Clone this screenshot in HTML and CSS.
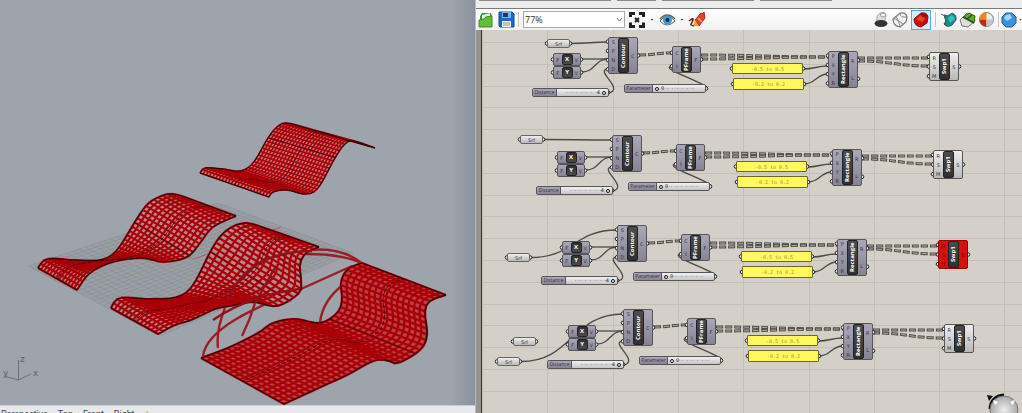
FILE: index.html
```html
<!DOCTYPE html>
<html lang="en">
<head>
<meta charset="utf-8">
<title>Rhino and Grasshopper</title>
<link rel="stylesheet" href="styles.css">
</head>
<body>
<main class="workspace">
  <section class="rhino">
    <svg class="viewport" id="viewport" aria-label="Perspective viewport"></svg>
    <nav class="view-tabs">
      <a class="view-tab" href="#perspective">Perspective</a>
      <a class="view-tab" href="#top">Top</a>
      <a class="view-tab" href="#front">Front</a>
      <a class="view-tab" href="#right">Right</a>
      <a class="view-tab" href="#add">+</a>
    </nav>
  </section>

  <section class="grasshopper">
    <div class="ribbon"><i class="ribbon-a"></i><i class="ribbon-b"></i><i class="ribbon-c"></i><i class="ribbon-d"></i></div>
    <div class="toolbar">
      <button class="tool" aria-label="Open"><svg width="16" height="18" viewBox="0 0 16 18"><path d="M2 5 4 2h9l1 3v10H2z" fill="#3c9148"/><path d="M4 4 12 2v10l-8 2z" fill="#d9eed9"/><path d="m1 9 5-1 2-2 6-1v11H1z" fill="#62bd3a" stroke="#3a8b25"/></svg></button>
      <button class="tool save" aria-label="Save"><svg width="17" height="18" viewBox="0 0 17 18"><path d="M1 1h13l2 2v13H2l-1-1z" fill="#1f68c4" stroke="#164a91"/><path d="M4 1h9v6H4z" fill="#74b6ef"/><path d="M5 2h5v4H5z" fill="#23384e"/><path d="M4 10h9v6H4z" fill="#eee"/><path d="M5 12h7M5 14h7" stroke="#999"/></svg></button>
      <span class="divider"></span>
      <span class="zoom-box"><select class="zoom" aria-label="Zoom"><option>77%</option></select><svg class="chevron" width="7" height="5" viewBox="0 0 7 5" aria-hidden="true"><path d="m1 1 2.500 3L6 1" fill="none" stroke="#777"/></svg></span>
      <button class="tool" aria-label="Zoom extents"><svg width="16" height="16" viewBox="0 0 16 16"><path d="M1.500 5V1.500H6M10 1.500h4.500V5M14.500 10.500v4H10M6 14.500H1.500v-4" fill="none" stroke="#222" stroke-width="3"/><path d="m6 6 4 4m0-4-4 4" stroke="#222" stroke-width="2"/></svg></button>
      <span class="drop"></span>
      <button class="tool" aria-label="Named views"><svg width="17" height="14" viewBox="0 0 17 14"><path d="M1 8Q8-2 16 8 8 16 1 8z" fill="#e9f3f8" stroke="#5b6870"/><circle cx="8.500" cy="7" r="4.500" fill="#3d9bd4"/><circle cx="8.500" cy="7" r="2" fill="#102840"/><path d="M1 6Q8-2 16 6" fill="none" stroke="#5b6870" stroke-width="1.500"/></svg></button>
      <span class="drop"></span>
      <button class="tool" aria-label="Sketch"><svg width="18" height="17" viewBox="0 0 18 17"><path d="M7 9 13 2l2 1 1-2 1 6-6 8z" fill="#e2432b" stroke="#b12917"/><path d="m10 7 4 4" stroke="#f3a28f" stroke-width="1.500"/><path d="m7 9 4 6-6 0z" fill="#e9a32e"/><path d="M1 10q5-4 4-1t-2 4 3 2" fill="none" stroke="#61231c" stroke-width="1.500"/></svg></button>
      <span class="grow"></span>
      <span class="tool-set">
      <button class="tool" aria-label="No preview"><svg width="16" height="18" viewBox="0 0 16 18"><path d="M4 5 7 2q6-2 6 3l-2 8H4z" fill="#dedede" stroke="#aaa"/><ellipse cx="10" cy="4" rx="2.500" ry="2" fill="#fff" stroke="#999"/><ellipse cx="8" cy="12.500" rx="6.500" ry="3.500" fill="#333"/></svg></button>
      <button class="tool" aria-label="Wireframe preview"><svg width="18" height="18" viewBox="0 0 18 18"><path d="M2 8 9 2q6-1 7 4l-1 5-6 5q-7-1-7-8z" fill="#f3f3f3" stroke="#777" stroke-width="1.200"/><path d="M2 8q6-1 7 8M9 2q0 5 7 4M5 5q1 5 7 8" fill="none" stroke="#888"/></svg></button>
      <button class="tool tool-active" aria-label="Shaded preview"><svg width="18" height="18" viewBox="0 0 18 18"><path d="M2 8 9 2q6-1 7 4l-1 6-6 4q-7-1-7-8z" fill="#c90d0d" stroke="#850b0b"/><path d="M4 8 9 4q3 1 4 4l-3 3z" fill="#ef3c2c"/><ellipse cx="12" cy="4" rx="3" ry="2" fill="#971010"/></svg></button>
      </span>
      <span class="divider"></span>
      <span class="tool-set">
      <button class="tool" aria-label="Preview selected"><svg width="17" height="18" viewBox="0 0 17 18"><path d="m4 4 4 1 4-3q5 2 4 7l-4 5q-5 3-8-1l2-3z" fill="#15918e" stroke="#245858"/><path d="m8 7 4-3 3 4-5 4z" fill="#36c1ba"/><path d="m1 3 4 2 1 9" fill="none" stroke="#555"/></svg></button>
      <button class="tool" aria-label="Preview mesh"><svg width="17" height="18" viewBox="0 0 17 18"><path d="m1 9 7-7 7 3 1 5-7 6-6-1z" fill="#ddd" stroke="#777"/><path d="m5 6 5-4 6 3-1 7z" fill="#62ac17" stroke="#346810"/><path d="m4 6 11 6M8 8l5-4" stroke="#284e15" stroke-width="1.500"/></svg></button>
      <button class="tool" aria-label="Preview quality"><svg width="17" height="17" viewBox="0 0 17 17"><circle cx="8.500" cy="8.500" r="7" fill="#eee" stroke="#777"/><path d="M8.500 1.500v7h-7a7 7 0 0 1 7-7z" fill="#ef8a16"/><path d="M8.500 8.500v7a7 7 0 0 1-7-7z" fill="#c82818"/><path d="M8.500 8.500h7a7 7 0 0 1-7 7z" fill="#c4c4c4"/></svg></button>
      </span>
      <span class="tool-set tool-set-end">
      <span class="divider"></span>
      <button class="tool" aria-label="Document preview"><svg width="16" height="16" viewBox="0 0 16 16"><path d="m5 1 6 0 4 4v6l-4 4H5l-4-4V5z" fill="#3c92dc" stroke="#2b5b94"/><path d="m5 3 4-1 2 4-5 3-3-3z" fill="#9ed8fa"/></svg></button>
      <span class="drop drop-last"></span>
      </span>
    </div>
    <div class="canvas-frame">
      <div class="canvas" id="canvas">
        <svg class="wires" id="wires" aria-hidden="true"></svg>
        <svg class="compass" width="36" height="20" viewBox="0 0 36 20" aria-hidden="true">
          <defs><radialGradient id="ball"><stop offset="0" stop-color="#eee"/><stop offset="1" stop-color="#a9a9a9"/></radialGradient></defs>
          <path d="M4 16Q5 3 18 2" fill="none" stroke="#111" stroke-width="3"/><path d="m1 2 6 1-4 5z" fill="#111"/>
          <circle cx="18" cy="17" r="14" fill="url(#ball)" stroke="#777"/><path d="m7 7 5 2-3 3zm22 0-5 2 3 3z" fill="#fff"/>
        </svg>
      </div>
    </div>
  </section>
</main>
<script src="script.js"></script>
</body>
</html>
```
FILE: styles.css
```css
* { box-sizing: border-box; }
body { margin: 0; font-family: "Open Sans", "Noto Sans", sans-serif; }
.workspace { display: grid; grid-template-columns: 475fr 547fr; height: 100vh; overflow: hidden; }
.rhino { display: flex; flex-direction: column; min-width: 0; background: linear-gradient(90deg, #9da4ab calc(100% - 24px), #8b919d); }
.viewport { flex: 1; width: 100%; min-height: 0; }
.axis-name { font: 9px "DejaVu Sans", sans-serif; fill: #606267; }
.view-tabs { display: flex; gap: 10px; height: 8px; padding: 2px 1px 0; overflow: hidden; background: #e7e9ed; border-top: 1px solid #c8ced4; }
.view-tab { color: #444; font: 9px/12px Roboto, sans-serif; text-decoration: none; }
.view-tab:last-child { color: #777; }

.grasshopper { display: flex; flex-direction: column; min-width: 0; border-left: 1px solid #b8bcc2; background: #eee; }
.ribbon { display: flex; gap: 6px; height: 9px; padding-left: 3px; border-bottom: 1px solid #7b7b7b; background: #ececed; }
.ribbon i { height: 1px; background: #8a8a8a; }
.ribbon-a { width: 132px; }
.ribbon-b { width: 39px; }
.ribbon-c { width: 92px; }
.ribbon-d { width: 72px; }
.toolbar { display: flex; align-items: center; gap: 4px; height: 21px; padding-left: 2px; overflow: hidden; background: linear-gradient(#fff, #f1f1f1); }
.tool { display: flex; flex: none; align-items: center; justify-content: center; width: 16px; height: 20px; padding: 0; border: 0; background: none; }
.tool svg { flex: none; }
.tool-set { display: flex; flex: none; align-items: center; gap: 3px; }
.tool-set-end { gap: 2px; }
.tool-active { width: 20px; border: 1px solid #5ba7df; background: #d8ebf9; }
.divider { flex: none; width: 1px; height: 15px; background: #c6c6c6; }
.zoom-box { position: relative; display: flex; flex: none; width: 102px; height: 17px; }
.zoom { width: 100%; height: 100%; padding: 0 1px; border: 1px solid #aaa; appearance: none; background: #fff; color: #333; font: 9px "Open Sans", sans-serif; }
.chevron { position: absolute; right: 2px; top: 6px; pointer-events: none; }
.drop { flex: none; width: 4px; height: 2px; margin: 0 1px; background: #333; clip-path: polygon(0 0, 100% 0, 50% 100%); }
.drop-last { width: 3px; margin: 0; }
.grow { flex: 1; }
.canvas-frame { display: flex; flex: 1; min-height: 0; padding-left: 5px; background: #96948e; }
.canvas { position: relative; flex: 1; overflow: hidden; border-left: 1px solid #333; background: #d4d0c8; }
.wires { position: absolute; width: 100%; height: 100%; }
.grid-line { stroke: #c4c0b8; }
.wire { fill: none; stroke: #4b4b49; stroke-width: 1.3; }
.wire-tree { fill: none; stroke: #4e4d4a; stroke-width: 3; stroke-dasharray: 7 2; }
.wire-core { fill: none; stroke: #b4b0a8; stroke-width: 1; stroke-dasharray: 5 4; stroke-dashoffset: -1; }
.grip { fill: #eee; stroke: #222; }
.compass { position: absolute; right: 0; bottom: 0; }

.node { position: absolute; display: flex; border: 1px solid #55545c; border-radius: 2px; background: linear-gradient(#aaa8b8, #868493); color: #33323a; font: 5px/6px "DejaVu Sans", sans-serif; }
.node-light { background: linear-gradient(#eee, #b9b9b9); }
.node-error { border-color: #900; background: #d61010; color: #6d0000; }
.ports { display: flex; flex: 1; flex-direction: column; justify-content: space-around; text-align: center; }
.core { display: flex; flex: none; align-items: center; justify-content: center; width: 11px; border: 1px solid #222; border-radius: 2px; background: linear-gradient(#303030, #4b4b4b); color: #fff; font: bold 6px/9px "Open Sans", sans-serif; }
.core-tall { writing-mode: vertical-rl; rotate: 180deg; white-space: nowrap; }
.param { align-items: center; justify-content: center; border-color: #666; }
.panel { align-items: center; justify-content: center; border-color: #6b6725; border-radius: 1px; background: #fff95c; color: #99953c; font: 5px/8px "DejaVu Sans Mono", monospace; }
.slider { align-items: stretch; overflow: hidden; background: linear-gradient(#f1f1f1, #c5c5c5); }
.slider-name { flex: none; border-right: 1px solid #55545c; background: linear-gradient(#aaa8b8, #868493); font-family: "Open Sans", sans-serif; line-height: 7px; text-align: center; }
.name-distance { width: 24px; }
.name-parameter { width: 28px; }
.track { position: relative; display: flex; flex: 1; align-items: center; min-width: 0; padding: 0 2px; }
.range { flex: 1; min-width: 0; width: 0; height: 5px; margin: 0; appearance: none; background: repeating-linear-gradient(90deg, #aaa 0 1px, #ccc 1px 5px) center / 70% 1px no-repeat; }
.range::-webkit-slider-thumb { appearance: none; width: 4px; height: 4px; border: 1px solid #111; border-radius: 50%; background: #fff; }
.value { position: absolute; top: 0; line-height: 7px; color: #222; }
.track-end .value { right: 8px; }
.track-start .value { left: 8px; }
```
FILE: script.js
```js
const NS = "http://www.w3.org/2000/svg";
function draw(parent, name, attrs, text) {
  const el = document.createElementNS(NS, name);
  for (const key in attrs) el.setAttribute(key, attrs[key]);
  if (text) el.textContent = text;
  parent.appendChild(el);
  return el;
}

/* ---- Perspective viewport ---- */
const view = document.getElementById("viewport");
const mix = (p, q, t) => [p[0] + (q[0] - p[0]) * t, p[1] + (q[1] - p[1]) * t];
const toPath = pts => "M" + pts.map(p => p[0].toFixed(2) + "," + p[1].toFixed(2)).join("L");

// Catmull-Rom curve through the points, resampled to n + 1 equal steps.
function smooth(points, n) {
  const dense = [];
  for (let i = 0; i < points.length - 1; i++) {
    const a = points[Math.max(0, i - 1)], b = points[i], c = points[i + 1], d = points[Math.min(points.length - 1, i + 2)];
    for (let s = 0; s < 16; s++) {
      const t = s / 16;
      dense.push([0, 1].map(k => 0.5 * (2 * b[k] + (c[k] - a[k]) * t + (2 * a[k] - 5 * b[k] + 4 * c[k] - d[k]) * t * t + (3 * b[k] - a[k] - 3 * c[k] + d[k]) * t * t * t)));
    }
  }
  dense.push(points[points.length - 1]);
  const len = [0];
  for (let i = 1; i < dense.length; i++) len.push(len[i - 1] + Math.hypot(dense[i][0] - dense[i - 1][0], dense[i][1] - dense[i - 1][1]));
  const out = [];
  let j = 1;
  for (let i = 0; i <= n; i++) {
    const goal = len[len.length - 1] * i / n;
    while (j < len.length - 1 && len[j] < goal) j++;
    out.push(mix(dense[j - 1], dense[j], (goal - len[j - 1]) / (len[j] - len[j - 1])));
  }
  return out;
}

function surface(s) {
  const a = smooth(s.a, s.u), b = smooth(s.b, s.u);
  let cells = "", lines = "";
  for (let i = 0; i < s.u; i++) {
    const quad = [a[i], a[i + 1], b[i + 1], b[i]];
    const area = quad.reduce((sum, p, k) => { const q = quad[(k + 1) % 4]; return sum + p[0] * q[1] - q[0] * p[1]; }, 0);
    cells += toPath(area < 0 ? quad.reverse() : quad) + "Z";
  }
  for (let i = 0; i <= s.u; i++) lines += toPath([a[i], b[i]]);
  for (let k = 0; k <= s.v; k++) lines += toPath(a.map((p, i) => mix(p, b[i], k / s.v)));
  draw(view, "path", { d: cells, fill: s.fill, stroke: s.fill, "stroke-width": 0.5 });
  draw(view, "path", { d: lines, fill: "none", stroke: "#a80006", "stroke-width": s.line });
  const mid = Math.round(s.u * 0.66);
  draw(view, "path", { d: toPath(a.map((p, i) => mix(p, b[i], 0.5))) + toPath([a[mid], b[mid]]), fill: "none", stroke: "#420006", "stroke-width": 0.8, "stroke-dasharray": "5 1" });
  draw(view, "path", { d: toPath(a) + toPath(b) + toPath([a[0], b[0]]) + toPath([a[s.u], b[s.u]]), fill: "none", stroke: "#1c0c10", "stroke-width": 1 });
}

const ground = [[28, 266], [218, 203], [353, 253], [160, 336]];
draw(view, "path", { d: toPath(ground) + "Z", fill: "#999fa5" });
let mesh = "";
for (let i = 0; i <= 30; i++) {
  const t = i / 30;
  mesh += toPath([mix(ground[0], ground[1], t), mix(ground[3], ground[2], t)]) + toPath([mix(ground[0], ground[3], t), mix(ground[1], ground[2], t)]);
}
draw(view, "path", { d: mesh, fill: "none", stroke: "#868c91", "stroke-width": 0.5 });
draw(view, "path", { d: "M194 259 281 227", stroke: "#b45a60" });
draw(view, "path", { d: "M160 247 194 259", stroke: "#58a356" });

surface({ u: 34, v: 22, line: 1.6, fill: "#c07a81",
  a: [[200, 173], [205, 168], [223, 169], [240, 171], [253, 163], [268, 138], [277, 127], [287, 123], [309, 129]],
  b: [[269, 197], [273, 192], [287, 190], [305, 194], [318, 188], [335, 158], [345, 144], [354, 141], [375, 148]] });
surface({ u: 36, v: 13, line: 2.1, fill: "#b8868e",
  a: [[38, 268], [47, 259], [73, 260], [100, 260], [117, 250], [138, 217], [150, 202], [168, 194], [182, 196]],
  b: [[77, 290], [90, 273], [113, 262], [143, 258], [163, 262], [187, 257], [200, 243], [213, 227], [236, 216]] });

const ribs = (d, color) => draw(view, "path", { d, fill: "none", stroke: color, "stroke-width": 2.4 });
ribs("M203 356C207 326 265 304 301 289L352 266M218 348Q216 330 225 308M242 336Q250 320 255 303M310 250Q342 247 363 264M306 254Q345 254 363 264M320 322Q323 300 343 285", "#9b1d26");
surface({ u: 36, v: 13, line: 2.2, fill: "#b8868e",
  a: [[111, 308], [120, 298], [150, 299], [177, 297], [193, 285], [213, 247], [227, 230], [245, 223], [262, 227]],
  b: [[158, 334], [175, 325], [191, 320], [215, 309], [230, 306], [253, 302], [277, 306], [299, 293], [301, 280], [300, 264], [306, 253], [319, 247]] });
ribs("M228 300Q246 252 312 251M255 303 276 266M213 320Q250 295 300 289", "#8f1119");
surface({ u: 38, v: 15, line: 2.3, fill: "#b9424a",
  a: [[201, 358], [230, 347], [258, 333], [273, 323], [295, 319], [320, 323], [337, 313], [342, 300], [341, 282], [348, 269], [362, 263]],
  b: [[284, 404], [323, 386], [347, 375], [373, 361], [386, 360], [398, 363], [420, 350], [427, 335], [425, 312], [430, 301], [446, 295]] });

draw(view, "path", { d: "M18.500 360V380L31 374M18.500 380 4 376", fill: "none", stroke: "#6e7075" });
draw(view, "text", { x: 20, y: 362, class: "axis-name" }, "z");
draw(view, "text", { x: 33, y: 376, class: "axis-name" }, "x");
draw(view, "text", { x: 3, y: 376, class: "axis-name" }, "y");

/* ---- Definition canvas ---- */
const canvas = document.getElementById("canvas");
const wires = document.getElementById("wires");
for (let i = 0; i < 60; i++) draw(wires, "line", { x1: 0, x2: "100%", y1: 12.5 + Math.round(i * 21.8), y2: 12.5 + Math.round(i * 21.8), class: "grid-line" });
for (let i = 0; i < 30; i++) draw(wires, "line", { y1: 0, y2: "100%", x1: 0.5 + Math.round(i * 65.3), x2: 0.5 + Math.round(i * 65.3), class: "grid-line" });

const rows = [
  { x: 0, y: 0, srf: [[65, 9]] },
  { x: 4, y: 98, srf: [[38, 105]] },
  { x: 9, y: 188, srf: [[25, 223]] },
  { x: 15, y: 272, srf: [[31, 307], [15, 327]] }
];

function node(x, y, w, h, cls, html) {
  const el = document.createElement("div");
  el.className = "node " + cls;
  el.style.cssText = `left:${x}px;top:${y}px;width:${w}px;height:${h}px`;
  el.innerHTML = html;
  canvas.insertBefore(el, canvas.querySelector(".compass"));
}
function grips(x, y, h, n) {
  for (let i = 0; i < n; i++) draw(wires, "circle", { cx: x, cy: y + h * (i + 0.5) / n, r: 1.8, class: "grip" });
}
const column = names => `<div class="ports">${names.split("").map(n => `<span>${n}</span>`).join("")}</div>`;
function component(x, y, w, h, ins, name, outs, cls = "") {
  grips(x, y, h, ins.length);
  grips(x + w, y, h, outs.length);
  node(x, y, w, h, cls, column(ins) + `<div class="core ${name.length > 1 ? "core-tall" : ""}">${name}</div>` + column(outs));
}
function link(x1, y1, x2, y2, tree) {
  const m = (x1 + x2) / 2, d = `M${x1} ${y1}C${m} ${y1} ${m} ${y2} ${x2} ${y2}`;
  draw(wires, "path", { d, class: tree ? "wire-tree" : "wire" });
  if (tree) draw(wires, "path", { d, class: "wire-core" });
}

rows.forEach((row, r) => {
  const x = row.x, y = row.y;
  const last = row.srf[row.srf.length - 1];
  link(last[0] + 24, last[1] + 4.5, x + 126, y + 12);
  link(x + 100, y + 29, x + 126, y + 29);
  link(x + 100, y + 42, x + 126, y + 29);
  draw(wires, "path", { class: "wire", d: `M${x + 127} ${y + 63}C${x + 143} ${y + 59} ${x + 112} ${y + 40} ${x + 126} ${y + 39}` });
  draw(wires, "path", { class: "wire", d: `M${x + 224} ${y + 59}C${x + 234} ${y + 56} ${x + 174} ${y + 38} ${x + 190} ${y + 36}` });
  link(x + 157, y + 25, x + 190, y + 23, true);
  link(x + 219, y + 25, x + 346, y + 27, true);
  link(x + 219, y + 29, x + 346, y + 27, true);
  link(x + 321, y + 39, x + 346, y + 36);
  link(x + 322, y + 54, x + 346, y + 44);
  link(x + 376, y + 28, x + 447, y + 28, true);
  link(x + 376, y + 31, x + 447, y + 36, true);

  row.srf.forEach(p => {
    grips(p[0], p[1], 9, 1);
    grips(p[0] + 23, p[1], 9, 1);
    node(p[0], p[1], 23, 9, "node-light param", "Srf");
  });
  component(x + 71, y + 23, 28, 13, "F", "X", "V");
  component(x + 71, y + 36, 28, 13, "F", "Y", "V");
  component(x + 126, y + 7, 30, 37, "SPND", "Contour", "C");
  component(x + 190, y + 16, 29, 27, "Ct", "PFrame", "F");
  component(x + 346, y + 21, 30, 37, "PXYR", "Rectangle", "RL");
  component(x + 447, y + 22, 30, 29, "RSM", "Swp1", "S", r === 2 ? "node-error" : "node-light");

  grips(x + 126, y + 58, 9, 1);
  node(x + 50, y + 58, 77, 9, "slider", `<label class="slider-name name-distance" for="d${r}">Distance</label><div class="track track-end"><input class="range" type="range" id="d${r}" min="0" max="4" value="4"><span class="value">4</span></div>`);
  grips(x + 224, y + 54, 9, 1);
  node(x + 142, y + 54, 82, 9, "slider", `<label class="slider-name name-parameter" for="p${r}">Parameter</label><div class="track track-start"><input class="range" type="range" id="p${r}" min="0" max="1" value="0"><span class="value">0</span></div>`);

  grips(x + 250, y + 33, 11, 1);
  grips(x + 321, y + 33, 11, 1);
  grips(x + 251, y + 48, 12, 1);
  grips(x + 322, y + 48, 12, 1);
  node(x + 250, y + 33, 71, 11, "panel", "-0.5 to 0.5");
  node(x + 251, y + 48, 71, 12, "panel", "-0.2 to 0.2");
});
```
